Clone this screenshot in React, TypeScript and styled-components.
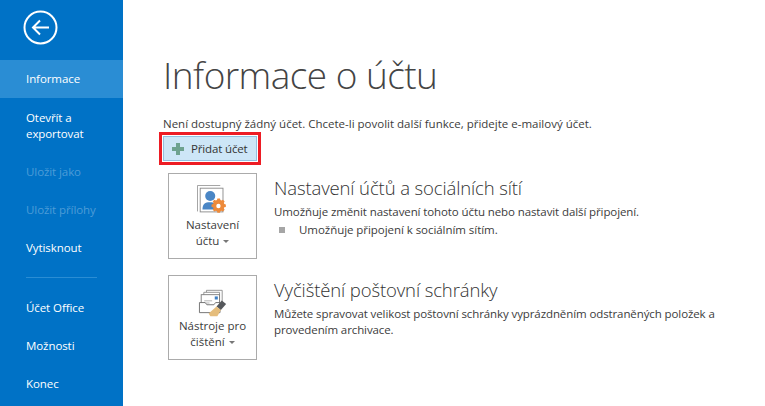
import React from "react";
import styled, { createGlobalStyle } from "styled-components";

const FONT = `"Open Sans", "Noto Sans", "Liberation Sans", sans-serif`;

const GlobalStyle = createGlobalStyle`
  html, body {
    margin: 0;
    padding: 0;
    height: 100%;
    background: #fff;
  }
  * { box-sizing: border-box; }
`;

const Page = styled.div`
  display: flex;
  width: 765px;
  height: 406px;
  overflow: hidden;
  font-family: ${FONT};
  color: #444;
`;

const Sidebar = styled.nav`
  width: 123px;
  height: 100%;
  flex-shrink: 0;
  background: #0072c6;
  display: flex;
  flex-direction: column;
`;

const BackWrap = styled.div`
  height: 60px;
  padding: 10px 0 0 23px;
`;

const NavItem = styled.div<{ $active?: boolean; $disabled?: boolean; $tall?: boolean }>`
  height: ${(p) => (p.$tall ? "55px" : "38px")};
  padding-left: 26px;
  display: flex;
  align-items: center;
  font-size: 11.5px;
  line-height: 16px;
  letter-spacing: -0.08px;
  color: ${(p) => (p.$disabled ? "#4d9cd7" : "#fff")};
  background: ${(p) => (p.$active ? "#2a8dd4" : "transparent")};
`;

const Divider = styled.div`
  height: 1px;
  margin: 10px 26px 11px;
  background: #2a8dd4;
`;

const Main = styled.main`
  flex: 1;
  padding: 0 0 0 37px;
  display: flex;
  flex-direction: column;
`;

const Title = styled.h1`
  margin: 49px 0 0 3px;
  font-size: 37px;
  line-height: 52px;
  font-weight: 300;
  color: #444;
  letter-spacing: -0.55px;
`;

const Notice = styled.p`
  margin: 15px 0 0 3px;
  font-size: 11.5px;
  line-height: 16px;
  color: #3c3c3c;
`;

const Highlight = styled.div`
  width: 102px;
  height: 33px;
  margin: 0 0 0 -1px;
  border: 3px solid #ed1c24;
  padding: 1px;
`;

const AddButton = styled.button`
  width: 100%;
  height: 100%;
  border: 1px solid #92c0e0;
  background: #cde6f7;
  display: flex;
  align-items: center;
  gap: 6px;
  padding: 0 0 0 7px;
  font-family: ${FONT};
  font-size: 11.5px;
  letter-spacing: -0.15px;
  color: #333;
`;

const Card = styled.section<{ $gap: number }>`
  display: flex;
  margin: ${(p) => p.$gap}px 0 0 8px;
`;

const Tile = styled.div<{ $height: number; $pad: number }>`
  width: 89px;
  height: ${(p) => p.$height}px;
  flex-shrink: 0;
  border: 1px solid #ababab;
  background: #fff;
  display: flex;
  flex-direction: column;
  align-items: center;
  padding-top: ${(p) => p.$pad}px;
  font-size: 11.5px;
  line-height: 16px;
  text-align: center;
  color: #3c3c3c;
`;

const TileIcon = styled.svg`
  display: block;
  margin-bottom: 1px;
`;

const Caret = styled.span`
  display: inline-block;
  margin-left: 4px;
  vertical-align: middle;
  border-left: 3px solid transparent;
  border-right: 3px solid transparent;
  border-top: 3px solid #777;
`;

const CardBody = styled.div`
  margin-left: 17px;
  padding-top: 3px;
`;

const CardTitle = styled.h2`
  margin: 0;
  font-size: 18.5px;
  line-height: 24px;
  font-weight: 300;
  letter-spacing: -0.12px;
  color: #333;
`;

const CardText = styled.p`
  margin: 4px 0 0;
  width: 445px;
  font-size: 11.5px;
  line-height: 16px;
  letter-spacing: -0.1px;
  color: #3c3c3c;
`;

const Bullet = styled.div`
  display: flex;
  align-items: center;
  margin: 2px 0 0 5px;
  font-size: 11.5px;
  line-height: 16px;
  letter-spacing: -0.05px;
  color: #3c3c3c;

  &::before {
    content: "";
    width: 6px;
    height: 6px;
    margin-right: 14px;
    background: #a6a6a6;
  }
`;

const BackIcon = () => (
  <svg width="36" height="36" viewBox="0 0 36 36" fill="none" stroke="#fff">
    <circle cx="17.5" cy="17.5" r="16" strokeWidth="2" />
    <path d="M10 17.5h16M17 10.5l-7 7 7 7" strokeWidth="2" />
  </svg>
);

const PlusIcon = () => (
  <svg width="14" height="14" viewBox="0 0 14 14">
    <path d="M5 1h4v4h4v4H9v4H5V9H1V5h4z" fill="#6ea28f" />
  </svg>
);

const AccountIcon = () => (
  <TileIcon width="31" height="31" viewBox="0 0 34 34">
    <path d="M.5 29V.5h25" fill="none" stroke="#9a9a9a" />
    <rect x="3.5" y="3.5" width="25" height="26" fill="#fff" stroke="#8a8a8a" />
    <circle cx="14.5" cy="12" r="5.5" fill="#4a86c5" />
    <path d="M6 27c0-6 3-8 8-8s8 2 8 8z" fill="#4a86c5" />
    <path
      d="M22 15h4l.6 2.4 1.7.7 2.2-1.3 2.6 2.7-1.3 2.1.7 1.8 2.4.6v3.8l-2.4.6-.7 1.8 1.3 2.1-2.6 2.7-2.2-1.3-1.7.7-.6 2.4h-4l-.6-2.4-1.7-.7-2.2 1.3-2.6-2.7 1.3-2.1-.7-1.8-2.4-.6V24l2.4-.6.7-1.8-1.3-2.1 2.6-2.7 2.2 1.3 1.7-.7z"
      transform="translate(6.5 4) scale(.72)"
      fill="#ed8a3b"
    />
    <circle cx="23.5" cy="23" r="2.4" fill="#fff" />
  </TileIcon>
);

const CleanupIcon = () => (
  <TileIcon width="30" height="28" viewBox="0 0 34 32">
    <path d="M9.5 5V1.5h18v14" fill="#fff" stroke="#8a8a8a" />
    <path d="M6.5 8V3.8h18v14" fill="#fff" stroke="#8a8a8a" />
    <rect x="3.5" y="6.5" width="21" height="14" fill="#fff" stroke="#777" />
    <rect x="19" y="8.5" width="3.5" height="3.5" fill="#3d7fc4" />
    <path d="M7 13.5h9M7 16h6" stroke="#aaa" />
    <path d="M1.5 15.5h6.5l2 2.5h8l2-2.5h5V27H1.5z" fill="#fff" stroke="#666" />
    <path d="M27 13l5 4-6 7-5-4z" fill="#55585c" />
    <path d="M21 20l5 4-4 7H14l-2-3z" fill="#e5bd7c" />
  </TileIcon>
);

export default function App() {
  return (
    <Page>
      <GlobalStyle />
      <Sidebar>
        <BackWrap>
          <BackIcon />
        </BackWrap>
        <NavItem $active>Informace</NavItem>
        <NavItem $tall>
          Otevřít a
          <br />
          exportovat
        </NavItem>
        <NavItem $disabled>Uložit jako</NavItem>
        <NavItem $disabled>Uložit přílohy</NavItem>
        <NavItem>Vytisknout</NavItem>
        <Divider />
        <NavItem>Účet Office</NavItem>
        <NavItem>Možnosti</NavItem>
        <NavItem>Konec</NavItem>
      </Sidebar>
      <Main>
        <Title>Informace o účtu</Title>
        <Notice>Není dostupný žádný účet. Chcete-li povolit další funkce, přidejte e-mailový účet.</Notice>
        <Highlight>
          <AddButton>
            <PlusIcon />
            Přidat účet
          </AddButton>
        </Highlight>
        <Card $gap={8}>
          <Tile $height={86} $pad={11}>
            <AccountIcon />
            Nastavení
            <span>
              účtu
              <Caret />
            </span>
          </Tile>
          <CardBody>
            <CardTitle>Nastavení účtů a sociálních sítí</CardTitle>
            <CardText>Umožňuje změnit nastavení tohoto účtu nebo nastavit další připojení.</CardText>
            <Bullet>Umožňuje připojení k sociálním sítím.</Bullet>
          </CardBody>
        </Card>
        <Card $gap={16}>
          <Tile $height={85} $pad={13}>
            <CleanupIcon />
            Nástroje pro
            <span>
              čištění
              <Caret />
            </span>
          </Tile>
          <CardBody>
            <CardTitle>Vyčištění poštovní schránky</CardTitle>
            <CardText>
              Můžete spravovat velikost poštovní schránky vyprázdněním odstraněných položek a provedením archivace.
            </CardText>
          </CardBody>
        </Card>
      </Main>
    </Page>
  );
}
